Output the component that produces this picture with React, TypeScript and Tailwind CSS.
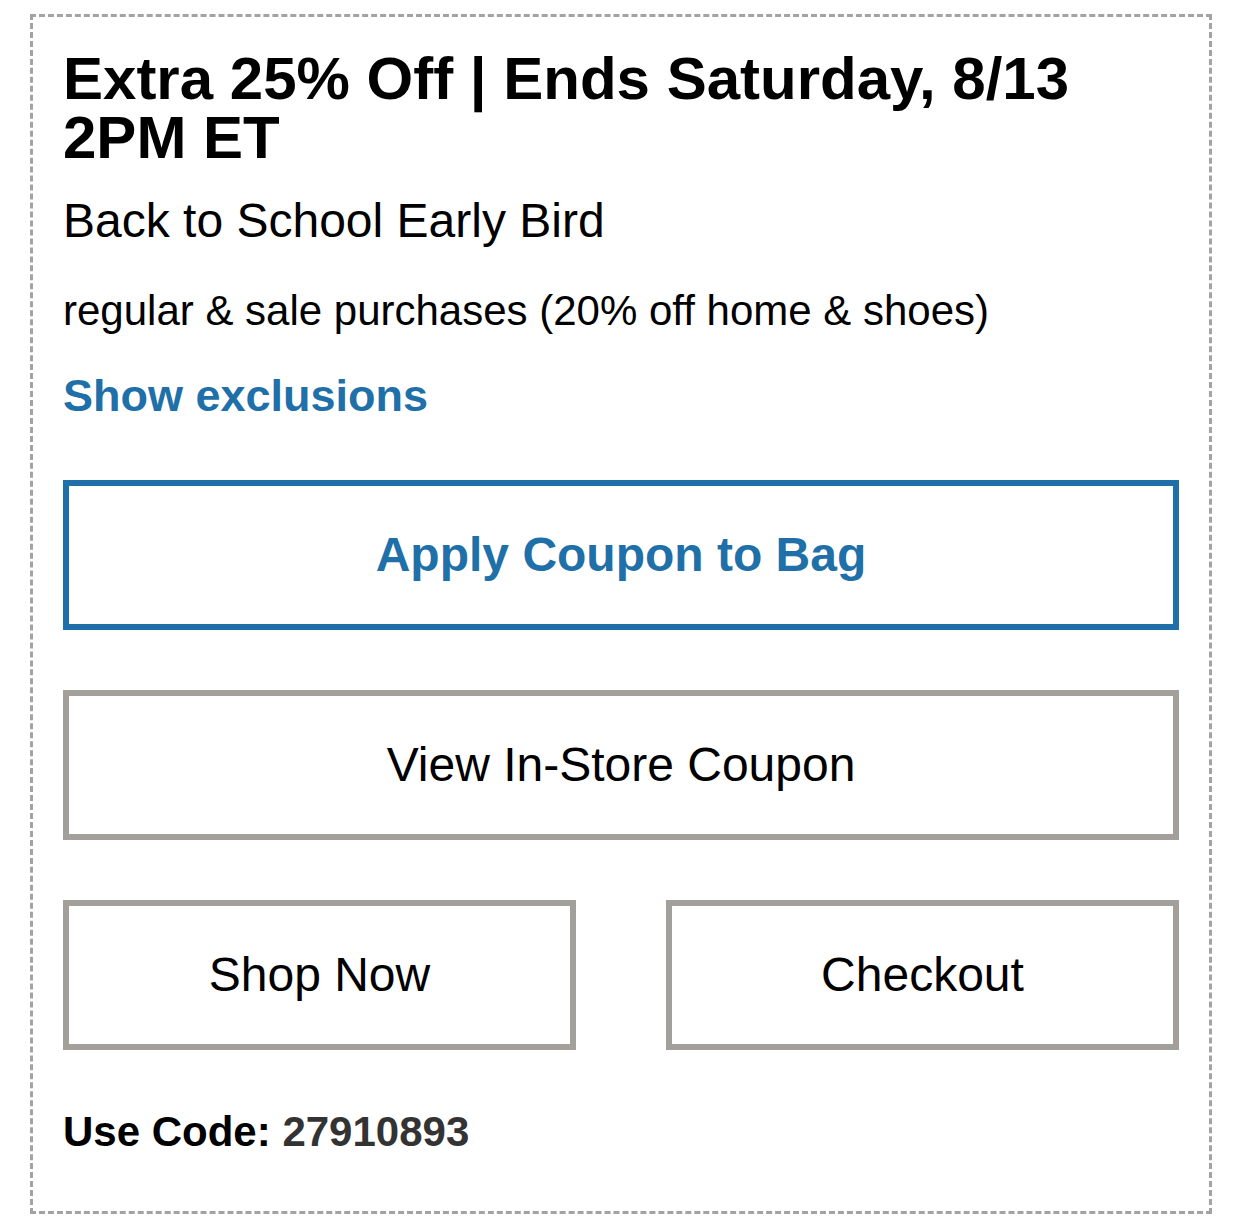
export default function App() {
  return (
    <div className="min-h-[1225px] bg-white pl-[30px] pr-[30px] pt-[14px] pb-[12px]" style={{ fontFamily: '"Liberation Sans", Arial, sans-serif' }}>
      <div className="border-[3px] border-dashed border-[#a3a3a3] pl-[30px] pr-[30px] pt-[32px] pb-[55px] text-black">
        <h1 className="text-[60px] font-bold leading-[59px]">Extra 25% Off | Ends Saturday, 8/13 2PM ET</h1>
        <p className="mt-[26px] text-[48px] leading-[56px]">Back to School Early Bird</p>
        <p className="mt-[38px] text-[42px] leading-[48px]">regular &amp; sale purchases (20% off home &amp; shoes)</p>
        <p className="mt-[35px] text-[45px] font-bold leading-[52px] text-[#1f6fa8]">Show exclusions</p>

        <div className="mt-[58px] flex flex-col gap-[60px]">
          <button className="flex h-[150px] w-full items-center justify-center border-[6px] border-[#1f6fa8] text-[48px] font-bold text-[#1f6fa8]">
            Apply Coupon to Bag
          </button>
          <button className="flex h-[150px] w-full items-center justify-center border-[6px] border-[#a39f9b] text-[48px] text-black">
            View In-Store Coupon
          </button>
          <div className="grid grid-cols-2 gap-[90px]">
            <button className="flex h-[150px] items-center justify-center border-[6px] border-[#a39f9b] text-[48px] text-black">
              Shop Now
            </button>
            <button className="flex h-[150px] items-center justify-center border-[6px] border-[#a39f9b] text-[48px] text-black">
              Checkout
            </button>
          </div>
        </div>

        <p className="mt-[58px] text-[42px] font-bold leading-[48px]">
          Use Code: <span className="text-[#333333]">27910893</span>
        </p>
      </div>
    </div>
  );
}
